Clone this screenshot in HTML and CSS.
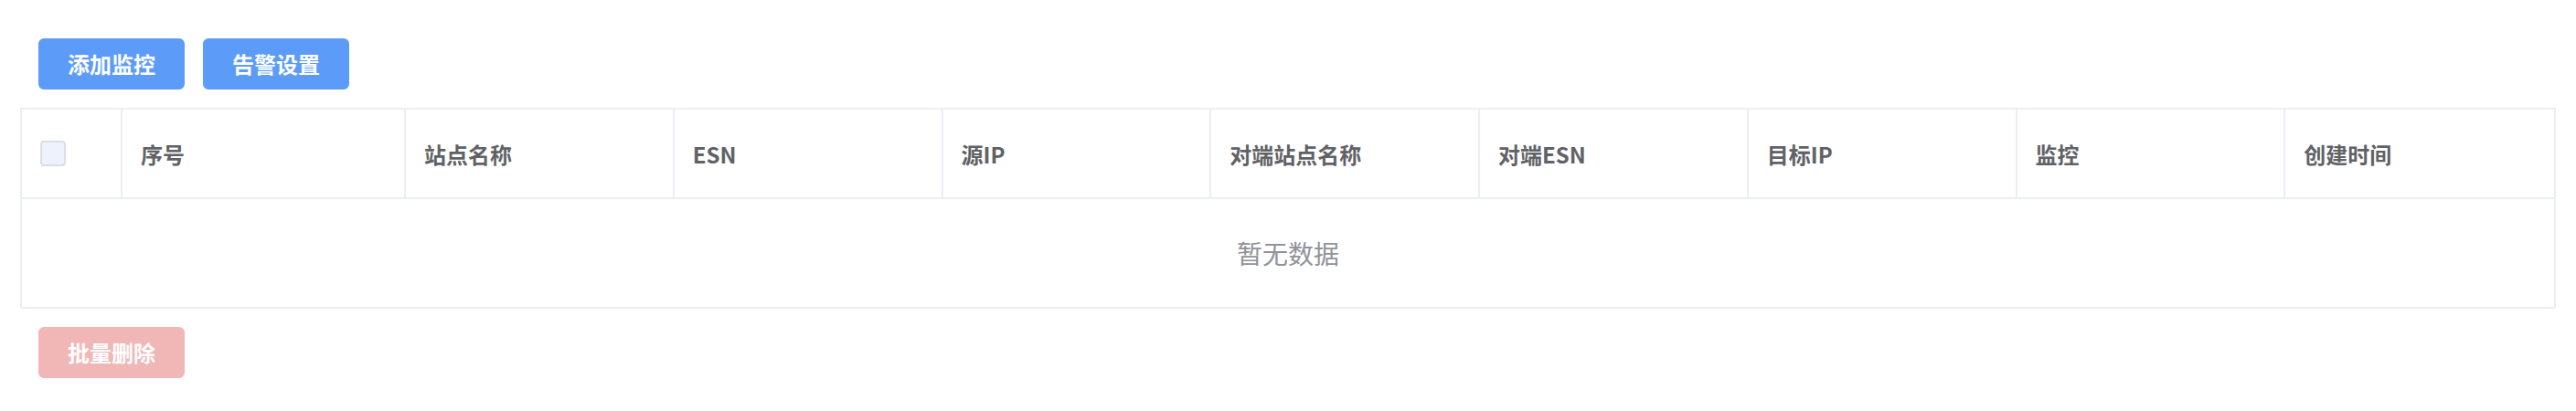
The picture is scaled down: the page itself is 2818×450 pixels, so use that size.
FILE: index.html
```html
<!DOCTYPE html>
<html lang="zh-CN">
<head>
<meta charset="utf-8">
<title>监控</title>
<link rel="stylesheet" href="styles.css">
</head>
<body>
<div class="page">
  <div class="toolbar">
    <button class="btn btn-primary">添加监控</button>
    <button class="btn btn-primary">告警设置</button>
  </div>
  <table class="grid">
    <colgroup>
      <col class="c-check">
      <col class="c-index">
      <col class="c-col"><col class="c-col"><col class="c-col"><col class="c-col">
      <col class="c-col"><col class="c-col"><col class="c-col"><col class="c-col">
    </colgroup>
    <thead>
      <tr>
        <th><span class="checkbox"></span></th>
        <th>序号</th>
        <th>站点名称</th>
        <th>ESN</th>
        <th>源IP</th>
        <th>对端站点名称</th>
        <th>对端ESN</th>
        <th>目标IP</th>
        <th>监控</th>
        <th class="last">创建时间</th>
      </tr>
    </thead>
    <tbody>
      <tr>
        <td class="empty" colspan="10">暂无数据</td>
      </tr>
    </tbody>
  </table>
  <div class="footer">
    <button class="btn btn-danger" disabled>批量删除</button>
  </div>
</div>
</body>
</html>
```
FILE: styles.css
```css
html, body {
  margin: 0;
  padding: 0;
  background: #ffffff;
}
body {
  font-family: "Noto Sans CJK SC", "Noto Sans", "Liberation Sans", sans-serif;
}
.page {
  padding: 42px 22px 0 22px;
}
.toolbar {
  display: flex;
  gap: 20px;
  padding-left: 20px;
  margin-bottom: 20px;
}
.btn {
  box-sizing: border-box;
  width: 160px;
  height: 56px;
  padding: 0;
  border: 2px solid transparent;
  border-radius: 6px;
  font-family: inherit;
  font-size: 24px;
  font-weight: 700;
  line-height: 1;
  color: #ffffff;
  cursor: pointer;
}
.btn-primary {
  background: #5c9cf8;
  border-color: #5c9cf8;
}
.btn-danger {
  background: #f0b7b6;
  border-color: #f0b7b6;
  cursor: not-allowed;
}
.grid {
  width: 100%;
  table-layout: fixed;
  border-collapse: separate;
  border-spacing: 0;
  border: 2px solid #ebeef5;
}
.c-check { width: 110px; }
.c-index { width: 310px; }
.grid th {
  box-sizing: border-box;
  height: 98px;
  padding: 0 0 0 20px;
  text-align: left;
  vertical-align: middle;
  font-size: 24px;
  font-weight: 700;
  color: #606266;
  border-right: 2px solid #ebeef5;
  border-bottom: 2px solid #ebeef5;
  white-space: nowrap;
}
.grid th.last {
  border-right: none;
}
.checkbox {
  display: block;
  box-sizing: border-box;
  width: 28px;
  height: 28px;
  border: 2px solid #dcdfe6;
  border-radius: 4px;
  background: #edf2fc;
}
.grid td.empty {
  height: 118px;
  padding: 0;
  text-align: center;
  vertical-align: middle;
  font-size: 28px;
  color: #909399;
}
.footer {
  padding: 20px 0 0 20px;
}
```
